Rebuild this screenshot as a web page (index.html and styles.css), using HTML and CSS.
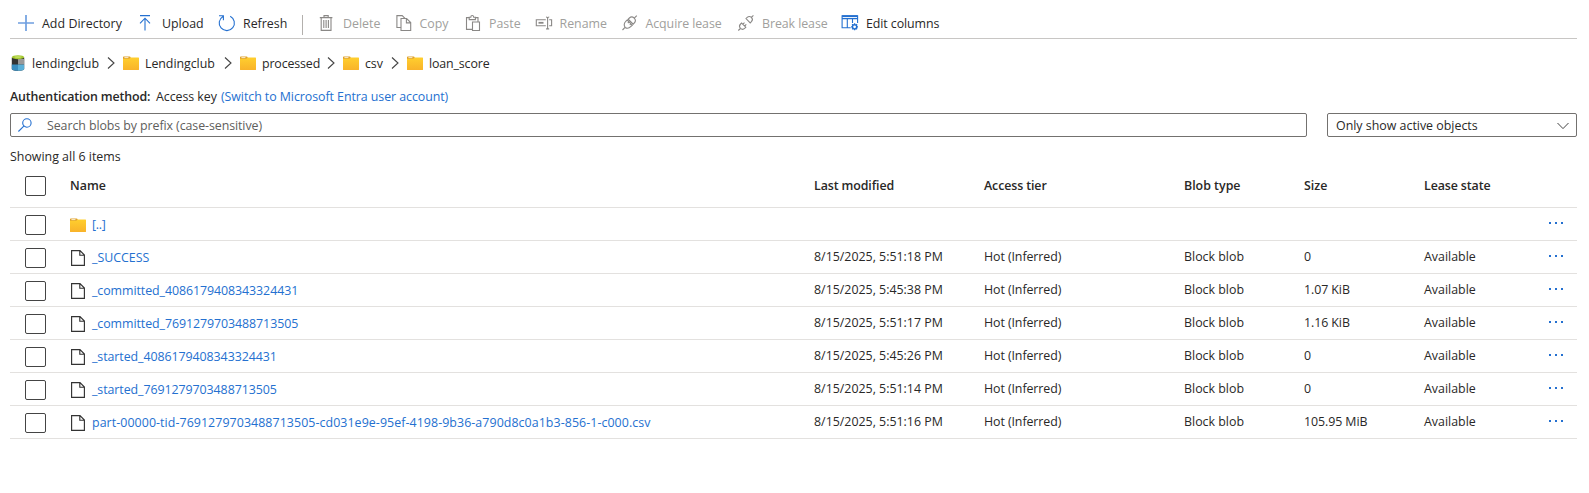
FILE: index.html
```html
<!DOCTYPE html>
<html lang="en">
<head>
<meta charset="utf-8">
<title>loan_score</title>
<link rel="stylesheet" href="styles.css">
</head>
<body>
<svg class="defs" width="0" height="0">
  <defs>
    <linearGradient id="gold" x1="0" y1="0" x2="0" y2="1"><stop offset="0" stop-color="#ffcf2e"/><stop offset="1" stop-color="#f9b32a"/></linearGradient>
    <symbol id="folder" viewBox="0 0 16 14">
      <path d="M0 1.2Q0 .4.8.4H6.6Q7.4.4 7.6 1.2L8 2.2V5H0Z" fill="#dfa12a"/>
      <path d="M1.4 1.3H5.4V2.1H1.4Z" fill="#fff"/>
      <path d="M0 2.8H6.2L7.8 1.5H15.5Q16 1.5 16 2V13.4Q16 14 15.4 14H.6Q0 14 0 13.4Z" fill="url(#gold)"/>
    </symbol>
    <symbol id="file" viewBox="0 0 14 16">
      <path d="M.6.6H9L13.4 5V15.4H.6ZM8.8.6V5.2H13.4" fill="none" stroke="#333" stroke-width="1.15"/>
    </symbol>
    <symbol id="chev" viewBox="0 0 8 12"><path d="M1 .5 7 6 1 11.5" fill="none" stroke="#444" stroke-width="1.1"/></symbol>
  </defs>
</svg>
<main class="page">
  <nav class="toolbar">
    <button class="cmd"><svg class="icon blue" viewBox="0 0 16 16"><path d="M8 0V16M0 8H16" stroke="#6f9fe0" stroke-width="1.7"/></svg><span class="t-add">Add Directory</span></button>
    <button class="cmd"><svg class="icon blue" viewBox="0 0 16 16"><path d="M2 .6H12M7 15.5V3.2M2 8.3 7 3.2 12 8.3"/></svg><span class="t-up">Upload</span></button>
    <button class="cmd divided"><svg class="icon blue" viewBox="0 0 16 16"><path d="M11.2 1.2A7.6 7.6 0 1 1 4 1.4M0 .8H4.4V5.2"/></svg><span class="t-ref">Refresh</span></button>
    <button class="cmd off"><svg class="icon" viewBox="0 0 16 16"><path d="M.8 2.6H13.4M5 2.4V.6H9.2V2.4M2.2 2.6V15.4H12V2.6M4.8 5V13M7.1 5V13M9.4 5V13"/></svg><span class="t-del">Delete</span></button>
    <button class="cmd off"><svg class="icon" viewBox="0 0 16 16"><path d="M4.5 12.5H.9V.6H6.2L9 3.4M5 3.5H10.6L14.7 7.6V15.5H5ZM10.4 3.6V7.9H14.6"/></svg><span class="t-copy">Copy</span></button>
    <button class="cmd off"><svg class="icon" viewBox="0 0 16 16"><path d="M7 14.4H1.5V2.6H4.2M10.4 2.6H13V6.4M4.2 4.6V2.2H5.8Q5.8.5 7.2.5T8.7 2.2H10.4V4.6ZM7.5 7H14.5V15.5H7.5Z"/></svg><span class="t-paste">Paste</span></button>
    <button class="cmd off"><svg class="icon" viewBox="0 0 16 16"><path d="M9.8 4.7H.3V10.8H9.8M13.2 4.7H15.6V10.8H13.2M10 2Q11.6 2 11.6 3.3V12.7Q11.6 14 10 14M13.2 2Q11.6 2 11.6 3.3M13.2 14Q11.6 14 11.6 12.7"/><path d="M2.5 7.8H7.5" stroke-width="1.8"/></svg><span class="t-ren">Rename</span></button>
    <button class="cmd off"><svg class="icon" viewBox="0 0 16 16"><path d="M.5 15 3 12.4M12 3.4 14.8.6M3.2 12.5Q.9 9.2 4 6.2L5.2 5 10.3 10.2 9 11.4Q6 14.5 3.2 12.5ZM6.2 4.2 7.4 3Q9.8.8 12.2 3.2T12.3 8L11.2 9.2ZM5.8 8 7.4 6.6M7.8 10 9.2 8.4"/></svg><span class="t-acq">Acquire lease</span></button>
    <button class="cmd off"><svg class="icon" viewBox="0 0 16 16"><path d="M.3 15.5 2.4 13.5M13.4 2.4 15.4.4M2.4 13.4Q.4 11.2 2.6 9L3.6 8 7.8 12.2 6.9 13.2Q4.6 15.4 2.4 13.4ZM8 3.6 9.2 2.4Q11.3.5 13.4 2.4T13.4 6.7L12.2 7.9ZM4.9 9.2 6.5 7.6M6.7 11 8.3 9.4"/></svg><span class="t-brk">Break lease</span></button>
    <button class="cmd"><svg class="icon blue" viewBox="0 0 16 16"><path d="M8.7 12.8H.1V.7H15.6V8M0 3.6H15.6M5.3 3.6V12.8M10.5 3.6V8"/><circle cx="12.6" cy="11.8" r="2.1" stroke-width="1.4"/><path d="M12.6 8.3V9.7M12.6 13.9V15.3M9.1 11.8H10.5M14.7 11.8H16M10.1 9.3 11.1 10.3M14.1 13.3 15.1 14.3M10.1 14.3 11.1 13.3M14.1 10.3 15.1 9.3" stroke-width="1.3"/><path d="M.1 1.2H15.6" stroke-width="1.8"/></svg><span class="t-edit">Edit columns</span></button>
  </nav>

  <nav class="crumbs">
    <svg class="storage" viewBox="0 0 14 16"><path d="M.8 2.5H13.2V14Q13.2 15.8 7 15.8T.8 14Z" fill="#333"/><path d="M7 4H13.2V9.5H7Z" fill="#999"/><path d="M.8 9.5H7V15.8Q.8 15.8.8 14Z" fill="#3a8dbf"/><path d="M7 9.5H13.2V14Q13.2 15.8 7 15.8Z" fill="#5bb0d8"/><ellipse cx="7" cy="2.2" rx="6.2" ry="2" fill="#a2c62e"/><ellipse cx="7" cy="2" rx="3.8" ry=".8" fill="#c9e36b"/></svg>
    <a class="c-1">lendingclub</a><svg class="chev"><use href="#chev"/></svg>
    <svg class="folder"><use href="#folder"/></svg><a class="c-2">Lendingclub</a><svg class="chev"><use href="#chev"/></svg>
    <svg class="folder"><use href="#folder"/></svg><a class="c-3">processed</a><svg class="chev"><use href="#chev"/></svg>
    <svg class="folder"><use href="#folder"/></svg><a class="c-4">csv</a><svg class="chev"><use href="#chev"/></svg>
    <svg class="folder"><use href="#folder"/></svg><a class="c-5">loan_score</a>
  </nav>

  <p class="auth"><b>Authentication method:</b><span class="key">Access key</span><a class="link switch">(Switch to Microsoft Entra user account)</a></p>

  <div class="filters">
    <div class="search"><svg class="lens" viewBox="0 0 14 14"><circle cx="8.9" cy="5" r="4.2"/><path d="M5.8 8.2.4 13.5"/></svg><span class="placeholder">Search blobs by prefix (case-sensitive)</span></div>
    <div class="select"><span class="choice">Only show active objects</span><svg class="down" viewBox="0 0 12 8"><path d="M.5 1 6 6.6 11.5 1"/></svg></div>
  </div>
  <p class="count">Showing all 6 items</p>

  <section class="list">
    <div class="row head"><i class="box"></i><span>Name</span><span class="h-mod">Last modified</span><span class="h-tier">Access tier</span><span class="h-type">Blob type</span><span>Size</span><span class="h-lease">Lease state</span></div>
    <div class="row"><i class="box"></i><span class="name"><svg class="folder"><use href="#folder"/></svg><a class="link n-up">[..]</a></span><span></span><span></span><span></span><span></span><span></span><span class="more"><i></i><i></i><i></i></span></div>
    <div class="row"><i class="box"></i><span class="name"><svg class="file"><use href="#file"/></svg><a class="link n-suc">_SUCCESS</a></span><span class="date">8/15/2025, 5:51:18 PM</span><span class="tier">Hot (Inferred)</span><span class="type">Block blob</span><span>0</span><span class="lease">Available</span><span class="more"><i></i><i></i><i></i></span></div>
    <div class="row"><i class="box"></i><span class="name"><svg class="file"><use href="#file"/></svg><a class="link n-com">_committed_4086179408343324431</a></span><span class="date">8/15/2025, 5:45:38 PM</span><span class="tier">Hot (Inferred)</span><span class="type">Block blob</span><span class="size">1.07 KiB</span><span class="lease">Available</span><span class="more"><i></i><i></i><i></i></span></div>
    <div class="row"><i class="box"></i><span class="name"><svg class="file"><use href="#file"/></svg><a class="link n-com">_committed_7691279703488713505</a></span><span class="date">8/15/2025, 5:51:17 PM</span><span class="tier">Hot (Inferred)</span><span class="type">Block blob</span><span class="size">1.16 KiB</span><span class="lease">Available</span><span class="more"><i></i><i></i><i></i></span></div>
    <div class="row"><i class="box"></i><span class="name"><svg class="file"><use href="#file"/></svg><a class="link n-sta">_started_4086179408343324431</a></span><span class="date">8/15/2025, 5:45:26 PM</span><span class="tier">Hot (Inferred)</span><span class="type">Block blob</span><span>0</span><span class="lease">Available</span><span class="more"><i></i><i></i><i></i></span></div>
    <div class="row"><i class="box"></i><span class="name"><svg class="file"><use href="#file"/></svg><a class="link n-sta">_started_7691279703488713505</a></span><span class="date">8/15/2025, 5:51:14 PM</span><span class="tier">Hot (Inferred)</span><span class="type">Block blob</span><span>0</span><span class="lease">Available</span><span class="more"><i></i><i></i><i></i></span></div>
    <div class="row"><i class="box"></i><span class="name"><svg class="file"><use href="#file"/></svg><a class="link n-part">part-00000-tid-7691279703488713505-cd031e9e-95ef-4198-9b36-a790d8c0a1b3-856-1-c000.csv</a></span><span class="date">8/15/2025, 5:51:16 PM</span><span class="tier">Hot (Inferred)</span><span class="type">Block blob</span><span class="size">105.95 MiB</span><span class="lease">Available</span><span class="more"><i></i><i></i><i></i></span></div>
  </section>
</main>
</body>
</html>
```
FILE: styles.css
```css
* { box-sizing: border-box; }
body { margin: 0; background: #fff; color: #292827; font: 12.4px/18px "Open Sans", "Noto Sans", sans-serif; }
p { margin: 0; }
svg { flex: none; fill: none; }
.defs { position: absolute; }
.page { padding: 8px 12px 0 10px; white-space: nowrap; }

.toolbar { display: grid; grid-template-columns: 120px 81px 100px 76.5px 69.5px 70.5px 86px 116.5px 104px 100px; height: 31px; padding-left: 8px; border-bottom: 1px solid #c8c6c4; }
.cmd { display: flex; align-items: center; gap: 8px; height: 30px; padding: 0; border: 0; background: none; color: inherit; font: inherit; }
.cmd span { padding-top: 2px; }
.off { color: #a19f9d; }
.icon { width: 16px; height: 16px; overflow: visible; stroke: #8a8886; stroke-width: 1.1; }
.blue { stroke: #2470d0; }
.divided { position: relative; }
.divided::after { content: ""; position: absolute; left: 83px; top: 7px; width: 1px; height: 20px; background: #b3b0ad; }
.t-add { letter-spacing: .04px; }
.t-acq, .t-brk, .t-edit { letter-spacing: -.08px; }

.crumbs { display: flex; align-items: center; height: 24px; margin-top: 12px; }
.crumbs a { padding-top: 2px; }
.storage { width: 14px; height: 16px; margin: 0 7px 0 1px; }
.folder { width: 16px; height: 14px; }
.crumbs .folder + a { margin-left: 6px; }
.chev { width: 8px; height: 12px; margin: 0 8px 0 9px; }
.c-1 { width: 66px; }
.c-2 { width: 70px; letter-spacing: -.05px; }
.c-3 { width: 56px; letter-spacing: -.14px; }
.c-4 { width: 17px; letter-spacing: -.1px; }
.c-5 { letter-spacing: -.13px; }

.auth { display: flex; height: 18px; margin-top: 13px; }
.auth b { width: 146px; letter-spacing: -.12px; }
.key { width: 65px; letter-spacing: -.05px; }
b, .head { font-weight: 600; }
.link { color: #2470d0; }
.switch { letter-spacing: -.06px; }

.filters { display: grid; grid-template-columns: 1fr 250px; gap: 20px; margin-top: 7px; height: 24px; }
.search, .select { display: flex; align-items: center; border: 1px solid #73716f; border-radius: 2px; }
.search { padding-left: 7px; }
.lens { width: 14px; height: 14px; stroke: #2470d0; stroke-width: 1.1; }
.placeholder { margin-left: 15px; padding-top: 2px; color: #605e5c; letter-spacing: -.08px; }
.choice { padding-top: 2px; }
.select { justify-content: space-between; padding: 0 7px 0 8px; }
.down { width: 12px; height: 8px; margin-top: 2px; stroke: #444; }
.count { margin-top: 11px; }

.row { display: grid; grid-template-columns: 45px 744px 170px 200px 120px 120px 125px 15px; align-items: center; height: 33px; padding-left: 15px; border-bottom: 1px solid #e3e1df; }
.head { height: 42px; padding-bottom: 1px; }
.h-mod, .h-tier, .h-lease { letter-spacing: -.1px; }
.box { width: 21px; height: 20px; border: 1px solid #444; border-radius: 2px; }
.head .box { margin-top: -1px; }
.row:not(.head) .box { margin-top: 2px; }
.name { display: flex; align-items: center; padding-top: 1px; }
.file { width: 14px; height: 16px; margin: 0 1px; }
.name .link { margin-left: 6px; }
.n-up { letter-spacing: -.3px; }
.n-com, .n-sta { letter-spacing: -.07px; }
.n-part { letter-spacing: .07px; }
.tier, .size { letter-spacing: -.08px; }
.more { display: flex; gap: 4px; margin-top: -2px; }
.more i { width: 2px; height: 2px; background: #2470d0; }
```
